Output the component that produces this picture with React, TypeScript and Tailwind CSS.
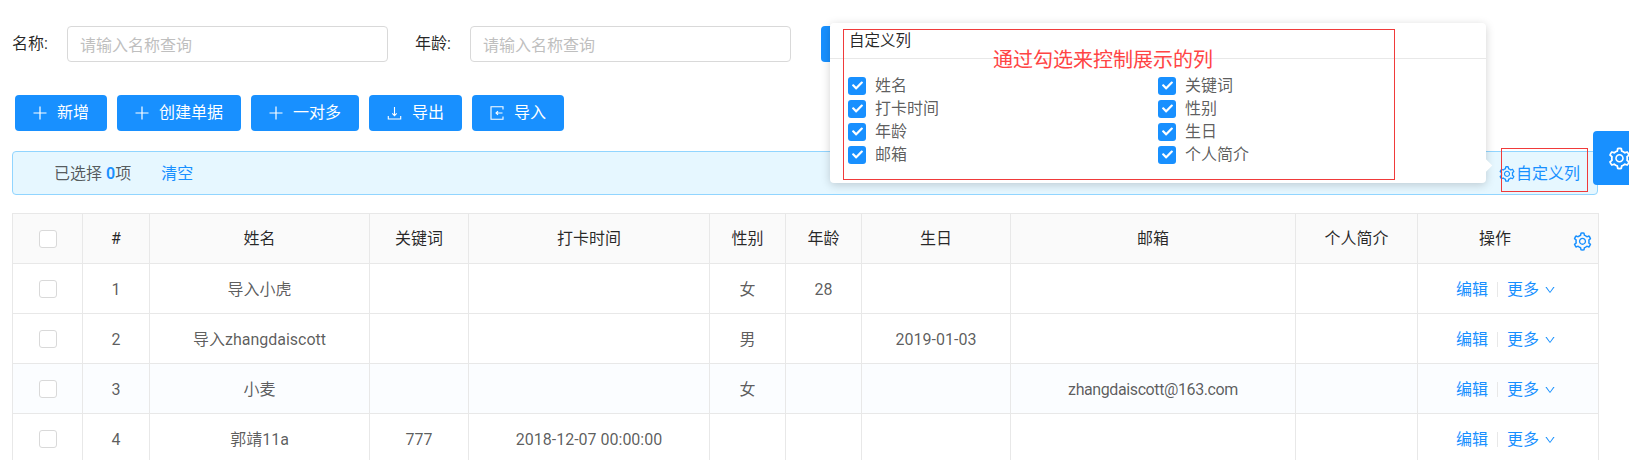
import React from 'react';
import { AiOutlineDown, AiOutlineSetting } from 'react-icons/ai';
import { FaCheck } from 'react-icons/fa';

function PlusIcon() {
  return (
    <svg width="14" height="14" viewBox="0 0 14 14" fill="none" stroke="currentColor" strokeWidth="1.2">
      <path d="M7 0.5v13M0.5 7h13" />
    </svg>
  );
}

function ExportIcon() {
  return (
    <svg width="15" height="14" viewBox="0 0 15 14" fill="none" stroke="currentColor" strokeWidth="1.1">
      <path d="M7.5 1v8.5M5.3 7.4l2.2 2.2 2.2-2.2M1.3 10v3h12.4v-3" />
    </svg>
  );
}

function ImportIcon() {
  return (
    <svg width="14" height="14" viewBox="0 0 14 14" fill="none" stroke="currentColor" strokeWidth="1.1">
      <path d="M13 3.5V.8H1v12.4h12v-2.7M12.5 7H6M8 5.2 6 7l2 1.8" />
    </svg>
  );
}

const toolbar = [
  { label: '新增', icon: PlusIcon },
  { label: '创建单据', icon: PlusIcon },
  { label: '一对多', icon: PlusIcon },
  { label: '导出', icon: ExportIcon },
  { label: '导入', icon: ImportIcon },
];

const columnOptions = [
  ['姓名', '关键词'],
  ['打卡时间', '性别'],
  ['年龄', '生日'],
  ['邮箱', '个人简介'],
];

const headers = ['#', '姓名', '关键词', '打卡时间', '性别', '年龄', '生日', '邮箱', '个人简介'];

const rows = [
  ['1', '导入小虎', '', '', '女', '28', '', '', ''],
  ['2', '导入zhangdaiscott', '', '', '男', '', '2019-01-03', '', ''],
  ['3', '小麦', '', '', '女', '', '', 'zhangdaiscott@163.com', ''],
  ['4', '郭靖11a', '777', '2018-12-07 00:00:00', '', '', '', '', ''],
];

function Field({ label }: { label: string }) {
  return (
    <div className="flex items-center">
      <label className="w-[55px] text-[rgba(0,0,0,0.85)]">{label}:</label>
      <input
        readOnly
        placeholder="请输入名称查询"
        className="h-9 w-[321px] rounded border border-[#d9d9d9] bg-white px-3 pt-[2px] outline-none placeholder:text-[#bfbfbf]"
      />
    </div>
  );
}

function TickBox() {
  return (
    <span className="flex h-[18px] w-[18px] shrink-0 items-center justify-center rounded-[3px] bg-[#1890ff] text-white">
      <FaCheck className="text-[11px]" />
    </span>
  );
}

function EmptyBox() {
  return <span className="mx-auto block h-[18px] w-[18px] rounded-[3px] border border-[#d9d9d9] bg-white" />;
}

function ColumnPopover() {
  return (
    <div className="absolute left-[830px] top-[23px] h-40 w-[656px] rounded bg-white shadow-[0_2px_10px_rgba(0,0,0,0.18)]">
      <div className="flex h-9 items-center border-b border-[#e8e8e8] pl-[19px] pt-[3px] text-[15.5px] text-[rgba(0,0,0,0.85)]">
        自定义列
      </div>
      <div className="grid grid-cols-[310px_1fr] pl-[18px] pt-[15px]">
        {columnOptions.flat().map(name => (
          <div key={name} className="flex h-[23px] items-center gap-[9px] text-[rgba(0,0,0,0.65)]">
            <TickBox />
            {name}
          </div>
        ))}
      </div>
      <span className="absolute -right-[4px] top-[137px] h-[11px] w-[11px] rotate-45 bg-white" />
    </div>
  );
}

export default function App() {
  return (
    <div className="relative h-[460px] w-[1629px] overflow-hidden bg-white font-['Roboto','Noto_Sans_CJK_SC',sans-serif] text-base text-[rgba(0,0,0,0.65)]">
      <div className="flex items-center gap-[27px] pl-3 pt-[26px]">
        <Field label="名称" />
        <Field label="年龄" />
        <button className="ml-[3px] h-9 w-[100px] rounded bg-[#1890ff]" />
      </div>

      <div className="mt-[33px] flex gap-[10px] pl-[15px]">
        {toolbar.map(({ label, icon: Icon }) => (
          <button key={label} className="flex h-9 items-center gap-[10px] rounded bg-[#1890ff] px-[18px] text-white">
            <Icon />
            {label}
          </button>
        ))}
      </div>

      <div className="ml-3 mt-5 flex h-11 w-[1586px] items-center rounded border border-[#91d5ff] bg-[#e6f7ff] pl-[41px] pt-[2px]">
        <span>
          已选择 <span className="font-semibold text-[#1890ff]">0</span>项
        </span>
        <a className="ml-[30px] text-[#1890ff]">清空</a>
        <span className="ml-auto mr-[17px] flex items-center text-[#1890ff]">
          <AiOutlineSetting className="text-[18px]" />
          自定义列
        </span>
      </div>

      <div className="relative ml-3 mt-[18px] w-[1586px]">
        <table className="w-full table-fixed border-collapse border border-[#e8e8e8] text-center">
          <colgroup>
            <col className="w-[70px]" />
            <col className="w-[67px]" />
            <col className="w-[220px]" />
            <col className="w-[99px]" />
            <col className="w-[241px]" />
            <col className="w-[76px]" />
            <col className="w-[76px]" />
            <col className="w-[149px]" />
            <col className="w-[285px]" />
            <col className="w-[122px]" />
            <col className="w-[181px]" />
          </colgroup>
          <thead>
            <tr className="h-[50px] bg-[#fafafa] text-[rgba(0,0,0,0.85)]">
              <th className="border border-[#e8e8e8] font-normal">
                <EmptyBox />
              </th>
              {headers.map(h => (
                <th key={h} className="border border-[#e8e8e8] font-normal">
                  {h}
                </th>
              ))}
              <th className="border border-[#e8e8e8] pr-[26px] font-normal">操作</th>
            </tr>
          </thead>
          <tbody>
            {rows.map((row, i) => (
              <tr key={row[0]} className={i === 2 ? 'h-[50px] bg-[#fbfdff]' : 'h-[50px]'}>
                <td className="border border-[#e8e8e8]">
                  <EmptyBox />
                </td>
                {row.map((cell, c) => (
                  <td key={c} className={c === 7 ? 'border border-[#e8e8e8] pt-[2px] tracking-[-0.4px]' : 'border border-[#e8e8e8] pt-[2px]'}>
                    {cell}
                  </td>
                ))}
                <td className="border border-[#e8e8e8] pr-1 pt-[2px] text-[#1890ff]">
                  <span className="inline-flex items-center">
                    编辑
                    <span className="mx-[9px] h-[15px] w-px bg-[#e8e8e8]" />
                    更多
                    <AiOutlineDown className="ml-[5px] text-[12px]" />
                  </span>
                </td>
              </tr>
            ))}
          </tbody>
        </table>
        <AiOutlineSetting className="absolute left-[1560px] top-[18px] text-[21px] text-[#1890ff]" />
      </div>

      <ColumnPopover />

      {/* drawer handle, cut off by the right edge */}
      <div className="absolute left-[1593px] top-[131px] flex h-[54px] w-12 items-center rounded-l bg-[#1890ff] pl-[14px] text-white">
        <AiOutlineSetting className="text-[25px]" />
      </div>

      {/* red annotations drawn over the screenshot */}
      <div className="absolute left-[843px] top-[29px] h-[151px] w-[552px] border border-[#f03a3a]" />
      <div className="absolute left-[1501px] top-[148px] h-[44px] w-[87px] border border-[#f03a3a]" />
      <span className="absolute left-[993px] top-[46px] text-[20px] leading-7 text-[#f44]">通过勾选来控制展示的列</span>
    </div>
  );
}
